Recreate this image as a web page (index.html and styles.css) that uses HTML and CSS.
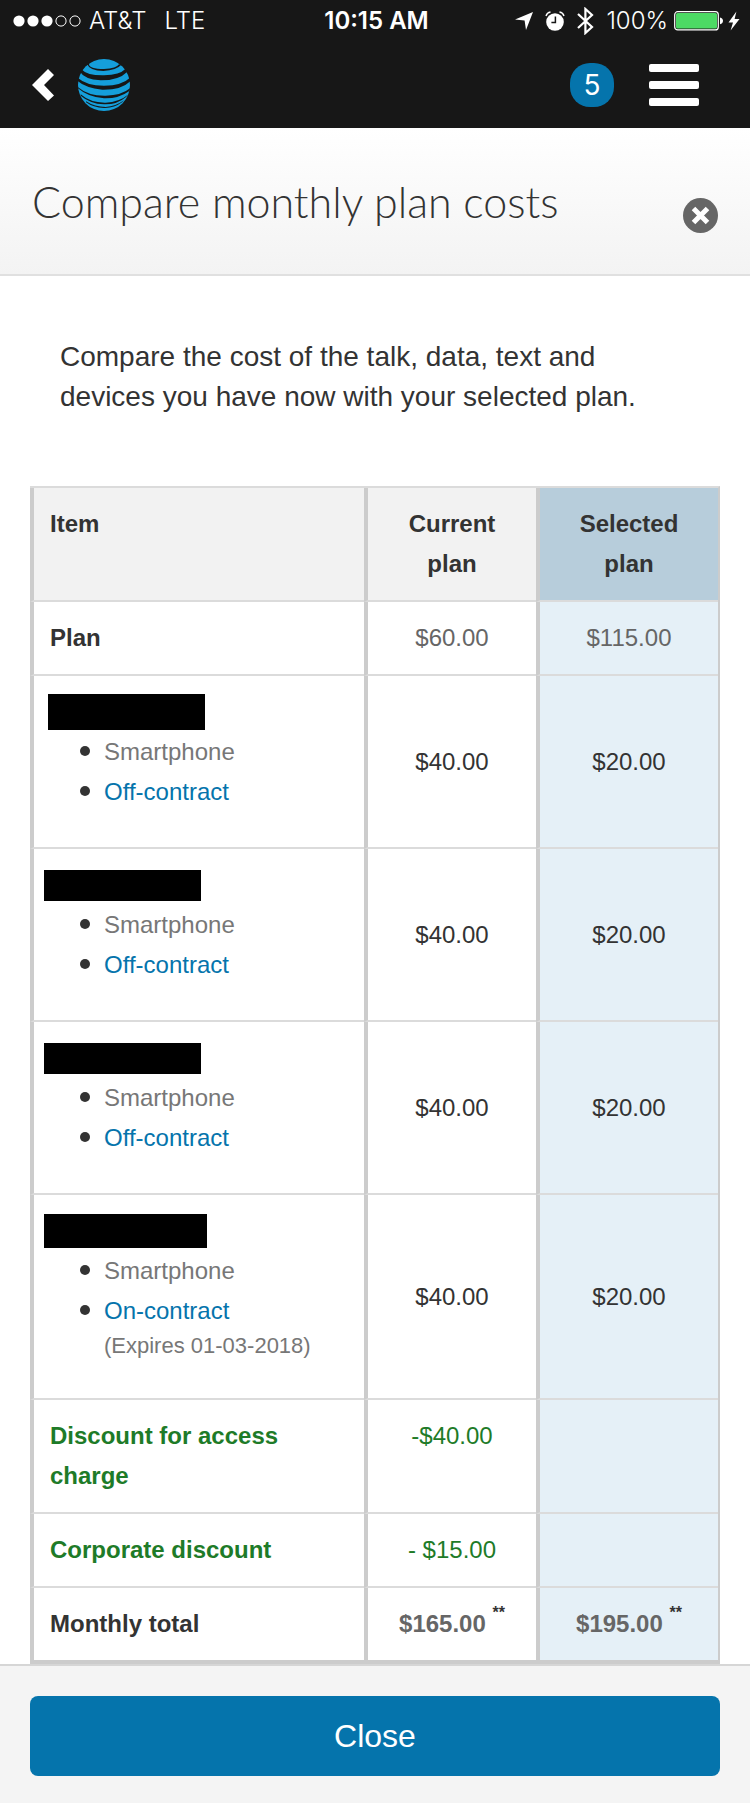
FILE: index.html
```html
<!DOCTYPE html>
<html lang="en">
<head>
  <meta charset="UTF-8">
  <meta name="viewport" content="width=device-width, initial-scale=1.0">
  <title>Compare monthly plan costs</title>
  <link rel="stylesheet" href="styles.css">
</head>
<body>

  <header class="top">
    <div class="status">
      <div class="status-left">
        <svg class="signal" width="68" height="12" viewBox="0 0 68 12">
          <g fill="#fff">
            <circle cx="6" cy="6" r="5.6"/>
            <circle cx="20" cy="6" r="5.6"/>
            <circle cx="34" cy="6" r="5.6"/>
          </g>
          <g fill="none" stroke="#fff">
            <circle cx="48" cy="6" r="5.1"/>
            <circle cx="62" cy="6" r="5.1"/>
          </g>
        </svg>
        <span>AT&amp;T</span>
        <span class="network">LTE</span>
      </div>
      <div class="status-time">10:15 AM</div>
      <div class="status-right">
        <svg width="18" height="18" viewBox="0 0 18 18" fill="#fff">
          <path d="M18 0 L11 18 L9.6 8.6 L0 7.4 Z"/>
        </svg>
        <svg width="20" height="20" viewBox="0 0 20 20">
          <circle cx="10" cy="11" r="8.8" fill="#fff"/>
          <path d="M1 5 Q2 1.5 5.5 1 M14.5 1 Q18 1.5 19 5" fill="none" stroke="#fff" stroke-width="1.4"/>
          <path d="M10.4 5.5 V11.6 H6.4" fill="none" stroke="#171717" stroke-width="1.5"/>
        </svg>
        <svg width="17" height="28" viewBox="0 0 17 28" fill="none" stroke="#fff" stroke-width="2.2">
          <path d="M1 7 L15 20 L8.4 26 V2 L15 8 L1 21"/>
        </svg>
        <span class="percent">100%</span>
        <svg width="50" height="20" viewBox="0 0 50 20">
          <rect x="0.7" y="0.7" width="43.6" height="18.2" rx="3" fill="none" stroke="#fff" stroke-width="1.2"/>
          <rect x="2" y="2" width="41" height="15.6" rx="1.6" fill="#4cd964"/>
          <path d="M46 6.4 Q49 7 49 9.8 Q49 12.6 46 13.2 Z" fill="#fff"/>
        </svg>
        <svg class="bolt" width="12" height="20" viewBox="0 0 12 20" fill="#fff">
          <path d="M8.4 0.5 L0.5 11.5 L5 11.5 L2.6 19.5 L11.5 8 L6.6 8 Z"/>
        </svg>
      </div>
    </div>

    <nav class="nav">
      <a class="back" href="#" aria-label="Back">
        <svg width="22" height="32" viewBox="0 0 22 32" fill="#fff">
          <path d="M16 0 L22 6 L12 16 L22 26.5 L16 32 L0 16 Z"/>
        </svg>
      </a>
      <a class="logo" href="#" aria-label="AT&amp;T home">
        <svg width="52" height="52" viewBox="12 12 156 156">
          <circle cx="90" cy="90" r="78" fill="#159fdb"/>
          <g fill="#171717">
            <path d="M36 20 L45 27 Q45 42 90 42 Q128 40 135 28 L142 29 Q128 45 88 48 Q46 47 40 28 L28 32 Z"/>
            <path d="M24 44 Q40 62 90 61 Q138 59 154 42 L160 50 Q135 76 80 76 Q30 72 18 50 Z"/>
            <path d="M10 67 Q35 92 90 92 Q145 91 168 68 L171 76 Q145 105 85 104 Q30 98 9 76 Z"/>
            <path d="M8 93 Q40 123 95 122 Q145 121 170 98 L166 108 Q135 131 90 130 Q40 126 10 98 Z"/>
            <path d="M20 118 Q50 144 95 143 Q135 142 164 118 L156 126 Q130 149 90 148 Q48 146 20 122 Z"/>
            <path d="M36 139 Q62 156 95 156 Q126 154 150 136 L144 142 Q120 160 90 159 Q58 158 36 142 Z"/>
          </g>
        </svg>
      </a>
      <a class="badge" href="#">5</a>
      <button class="menu" type="button" aria-label="Menu">
        <span></span>
        <span></span>
        <span></span>
      </button>
    </nav>
  </header>

  <div class="title-bar">
    <h1>Compare monthly plan costs</h1>
    <button class="dismiss" type="button" aria-label="Dismiss">
      <svg width="35" height="35" viewBox="0 0 35 35">
        <circle cx="17.5" cy="17.5" r="17.5" fill="#666"/>
        <path d="M10.5 10.5 L24.5 24.5 M24.5 10.5 L10.5 24.5" stroke="#fff" stroke-width="5"/>
      </svg>
    </button>
  </div>

  <main class="content">
    <p class="intro">Compare the cost of the talk, data, text and devices you have now with your selected plan.</p>

    <table class="costs">
      <thead>
        <tr>
          <th class="item" scope="col">Item</th>
          <th class="current" scope="col">Current plan</th>
          <th class="selected" scope="col">Selected plan</th>
        </tr>
      </thead>
      <tbody>
        <tr class="plan">
          <th scope="row">Plan</th>
          <td>$60.00</td>
          <td>$115.00</td>
        </tr>
        <tr class="phone">
          <th scope="row">
            <div class="name"><span class="redacted large"></span></div>
            <ul>
              <li>Smartphone</li>
              <li><a href="#">Off-contract</a></li>
            </ul>
          </th>
          <td>$40.00</td>
          <td>$20.00</td>
        </tr>
        <tr class="phone">
          <th scope="row">
            <div class="name"><span class="redacted"></span></div>
            <ul>
              <li>Smartphone</li>
              <li><a href="#">Off-contract</a></li>
            </ul>
          </th>
          <td>$40.00</td>
          <td>$20.00</td>
        </tr>
        <tr class="phone">
          <th scope="row">
            <div class="name"><span class="redacted"></span></div>
            <ul>
              <li>Smartphone</li>
              <li><a href="#">Off-contract</a></li>
            </ul>
          </th>
          <td>$40.00</td>
          <td>$20.00</td>
        </tr>
        <tr class="phone">
          <th scope="row">
            <div class="name"><span class="redacted wide"></span></div>
            <ul>
              <li>Smartphone</li>
              <li><a href="#">On-contract</a> <span class="expires">(Expires 01-03-2018)</span></li>
            </ul>
          </th>
          <td>$40.00</td>
          <td>$20.00</td>
        </tr>
        <tr class="discount">
          <th scope="row">Discount for access charge</th>
          <td>-$40.00</td>
          <td></td>
        </tr>
        <tr class="discount">
          <th scope="row">Corporate discount</th>
          <td>- $15.00</td>
          <td></td>
        </tr>
        <tr class="total">
          <th scope="row">Monthly total</th>
          <td>$165.00 <sup>**</sup></td>
          <td>$195.00 <sup>**</sup></td>
        </tr>
      </tbody>
    </table>
  </main>

  <footer class="bottom">
    <button class="close" type="button">Close</button>
  </footer>

</body>
</html>
```

FILE: styles.css
```css
* {
  box-sizing: border-box;
}

body {
  margin: 0;
  background-color: #fff;
  color: #333;
  font-family: "Liberation Sans", Arial, sans-serif;
  font-size: 24px;
  line-height: 40px;
}

svg {
  display: block;
}

a {
  color: #0574ac;
  text-decoration: none;
}

button {
  padding: 0;
  border: none;
  background: none;
  cursor: pointer;
}

/* status bar + nav */
.top {
  background-color: #171717;
  color: #fff;
  font-family: Inter, sans-serif;
}

.status {
  display: grid;
  grid-template-columns: 1fr auto 1fr;
  align-items: center;
  padding: 0 10px 0 13px;
  height: 41px;
  font-size: 24px;
}

.status-left,
.status-right {
  display: flex;
  align-items: center;
  gap: 8px;
}

.status-left {
  font-weight: 300;
}

.network {
  margin-left: 10px;
}

.status-time {
  font-weight: 600;
}

.status-right {
  justify-content: flex-end;
  gap: 12px;
  font-weight: 300;
}

.percent {
  margin-right: -6px;
}

.bolt {
  margin-left: -8px;
}

.nav {
  display: flex;
  align-items: center;
  height: 87px;
  padding: 0 51px 0 32px;
}

.logo {
  margin-left: 24px;
}

.badge {
  display: flex;
  align-items: center;
  justify-content: center;
  width: 44px;
  height: 44px;
  margin-left: auto;
  border-radius: 20px;
  background-color: #0574ac;
  color: #fff;
  font-size: 28px;
}

.menu {
  display: flex;
  flex-direction: column;
  gap: 9px;
  width: 50px;
  margin-left: 35px;
}

.menu span {
  height: 8px;
  border-radius: 2px;
  background-color: #fff;
}

/* title */
.title-bar {
  display: flex;
  justify-content: space-between;
  align-items: flex-end;
  padding: 50px 32px 41px;
  border-bottom: 2px solid #e0e0e0;
  background: linear-gradient(#fff, #f3f3f3);
}

h1 {
  margin: 0;
  padding-bottom: 7px;
  font-family: Lato, sans-serif;
  font-size: 43px;
  font-weight: 300;
  line-height: 48px;
}

/* content */
.content {
  padding: 61px 30px 0;
}

.intro {
  margin: 0 30px 69px;
  font-size: 28px;
}

.costs {
  width: 100%;
  table-layout: fixed;
  border-spacing: 0;
  border-top: 2px solid #dbdbdb;
  border-right: 2px solid #ccc;
}

.costs th,
.costs td {
  padding: 16px;
  border-left: 4px solid #ccc;
  border-bottom: 2px solid #dbdbdb;
  text-align: center;
  vertical-align: top;
}

.costs th:first-child {
  text-align: left;
}

.costs thead th {
  background-color: #f2f2f2;
}

.costs .current {
  width: 172px;
}

.costs .selected {
  width: 182px;
  background-color: #b7cddb;
}

.costs td:last-child {
  background-color: #e5f0f7;
}

.plan td,
.total td {
  color: #666;
}

.phone th {
  font-weight: normal;
}

.costs .phone td {
  vertical-align: middle;
}

.name {
  display: flex;
  align-items: center;
  height: 40px;
}

.redacted {
  width: 157px;
  height: 31px;
  margin-left: -6px;
  background-color: #000;
}

.redacted.large {
  height: 36px;
  margin-left: -2px;
}

.redacted.wide {
  width: 163px;
  height: 34px;
}

.phone ul {
  margin: 0 0 19px;
  padding-left: 30px;
  list-style: none;
}

.phone li {
  display: grid;
  grid-template-columns: 10px 1fr;
  column-gap: 14px;
  color: #777;
}

.phone li::before {
  content: "";
  width: 10px;
  height: 10px;
  margin-top: 14px;
  border-radius: 50%;
  background-color: #333;
}

.expires {
  grid-column: 2;
  padding-bottom: 2px;
  font-size: 22px;
  line-height: 30px;
}

.discount th,
.discount td {
  color: #1e7b28;
}

.total th,
.total td {
  font-weight: bold;
}

.costs .total th,
.costs .total td {
  border-bottom: 4px solid #ccc;
}

.total sup {
  color: #333;
  font-size: 16px;
  line-height: 0;
  vertical-align: 14px;
}

/* bottom bar */
.bottom {
  padding: 30px 30px 27px;
  border-top: 2px solid #d6d6d6;
  background-color: #f4f4f4;
}

.close {
  display: block;
  width: 100%;
  height: 80px;
  border-radius: 8px;
  background-color: #0574ac;
  color: #fff;
  font-family: "Liberation Sans", Arial, sans-serif;
  font-size: 32px;
}
```
